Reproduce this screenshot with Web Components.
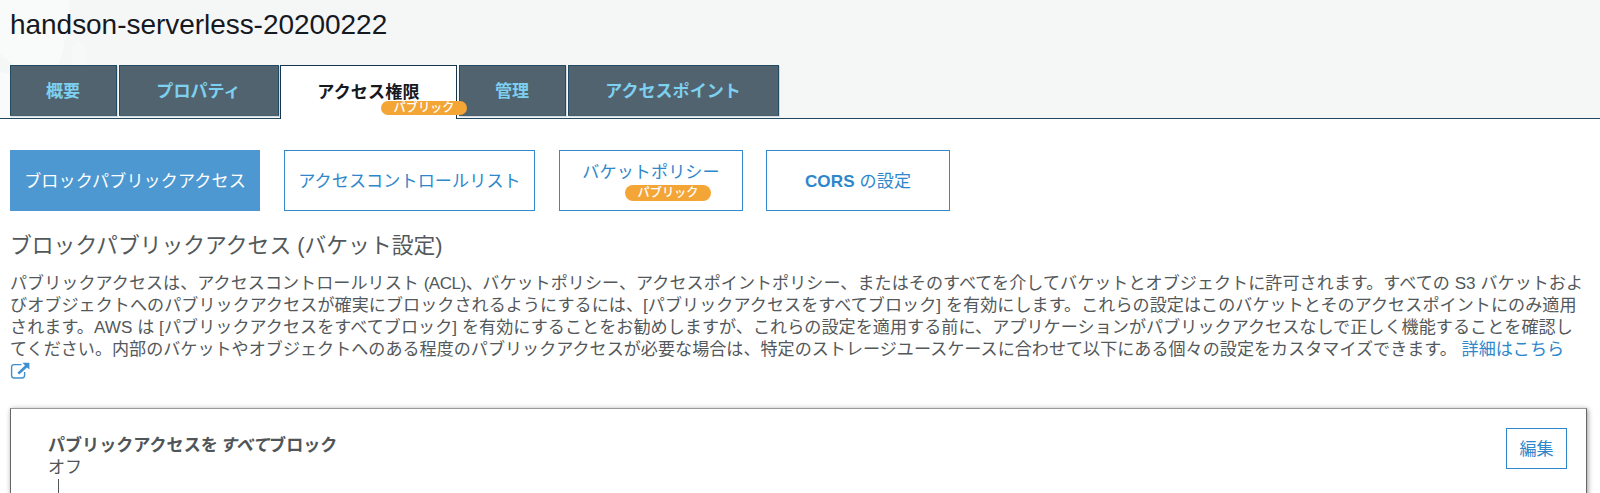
<!DOCTYPE html>
<html lang="ja">
<head>
<meta charset="utf-8">
<title>handson-serverless-20200222</title>
<style>
body{margin:0;background:#fff;height:493px;overflow:hidden;color:#53585a;font:17.07px/22px "Liberation Sans","Noto Sans CJK JP",sans-serif}
</style>
</head>
<body>
<s3-page></s3-page>
<script>
function define(name, html) {
  const t = document.createElement('template');
  t.innerHTML = html;
  customElements.define(name, class extends HTMLElement {
    constructor() {
      super();
      this.attachShadow({mode: 'open'}).append(t.content.cloneNode(true));
    }
  });
}

define('s3-badge', `<style>
:host{display:flex;align-items:center;justify-content:center;box-sizing:border-box;width:86px;height:14px;border-radius:7px;background:#f3a536;color:#fff;font-size:12.2px;font-weight:500;line-height:12px;white-space:nowrap;letter-spacing:0}
</style><slot></slot>`);

define('s3-tab', `<style>
:host{display:flex;position:relative;box-sizing:border-box;width:var(--w);height:51px;align-items:center;justify-content:center;background:#51636f;border:1px solid #234a63;border-bottom-color:#45606f;color:#7dd0f0;font-weight:700;white-space:nowrap;box-shadow:1px 1px 0 #d3d9de;padding:2px 1px 0 0}
:host([active]){height:54px;margin-left:-1px;background:#fff;border-color:#16364d;border-bottom:0;color:#16191f;padding:0;box-shadow:none;letter-spacing:.15px;z-index:2}
::slotted(s3-badge){position:absolute;left:100px;top:35px;z-index:2}
</style><slot></slot><slot name="badge"></slot>`);

define('s3-pill', `<style>
:host{display:flex;flex-direction:column;align-items:center;justify-content:center;box-sizing:border-box;width:var(--w);height:61px;padding-top:2px;border:1px solid #3389cb;color:#2e87cb;white-space:nowrap;letter-spacing:.12px}
:host([active]){background:#4d98d1;border-color:#4d98d1;color:#fff}
::slotted(s3-badge){margin:1px 0 1px 34px;height:16px!important;border-radius:8px!important}
b{font-weight:700}
</style><div><slot></slot></div><slot name="badge"></slot>`);

define('s3-header', `<style>
:host{display:grid;grid-template-rows:65px 53px;height:118px;box-sizing:content-box;border-bottom:1px solid #20485f;background:#f5f7f7;position:relative}
.art{position:absolute;left:0;top:0}
h1{margin:0;padding:9px 0 0 10px;font-size:28px;line-height:32px;font-weight:400;color:#16191f;position:relative;letter-spacing:-.04px}
nav{display:flex;align-items:flex-start;gap:2px;padding-left:10px;position:relative}
</style>
<svg class="art" width="110" height="118"><path d="M0 0H70Q68 36 58 66L40 90 10 118H0V72L30 78 0 54Z" fill="#f9fbfa"/><path d="M72 65V50Q72 42 79 42Q86 42 86 55V65Z" fill="#f7f9f8"/></svg>
<h1>handson-serverless-20200222</h1>
<nav>
<s3-tab style="--w:107px">概要</s3-tab>
<s3-tab style="--w:160px">プロパティ</s3-tab>
<s3-tab active style="--w:177px">アクセス権限<s3-badge slot="badge">パブリック</s3-badge></s3-tab>
<s3-tab style="--w:107px">管理</s3-tab>
<s3-tab style="--w:211px">アクセスポイント</s3-tab>
</nav>`);

define('s3-external-icon', `<style>:host{display:block;height:22px;padding-top:1px;box-sizing:border-box}svg{display:block}</style>
<svg width="20" height="18" viewBox="0 0 20 18"><path d="M11.4 2.6H4Q1.6 2.6 1.6 5V13.6Q1.6 16 4 16H12Q14.6 16 14.6 13.6V10" fill="none" stroke="#3d91d0" stroke-width="1.4"/><path d="M12.4.8H19.4V7.6L17 5.4 9.2 12.6 7.4 10.8 15 3.4Z" fill="#3d91d0"/></svg>`);

define('s3-notice', `<style>
:host{display:block;padding-left:10px;white-space:nowrap}
p{margin:0}p span{display:block;letter-spacing:.065px}
p i{font-style:normal;letter-spacing:-.5px}
p span.first{letter-spacing:.045px}
p span.last{letter-spacing:.025px}a{color:#2e87cb}
</style><p>
<span class="first">パブリックアクセスは、アクセスコントロールリスト <i>(ACL)、</i>バケットポリシー、アクセスポイントポリシー、またはそのすべてを介してバケットとオブジェクトに許可されます。すべての S3 バケットおよ</span>
<span>びオブジェクトへのパブリックアクセスが確実にブロックされるようにするには、[パブリックアクセスをすべてブロック] を有効にします。これらの設定はこのバケットとそのアクセスポイントにのみ適用</span>
<span>されます。AWS は [パブリックアクセスをすべてブロック] を有効にすることをお勧めしますが、これらの設定を適用する前に、アプリケーションがパブリックアクセスなしで正しく機能することを確認し</span>
<span class="last">てください。内部のバケットやオブジェクトへのある程度のパブリックアクセスが必要な場合は、特定のストレージユースケースに合わせて以下にある個々の設定をカスタマイズできます。 <a>詳細はこちら</a></span>
</p><s3-external-icon></s3-external-icon>`);

define('s3-settings', `<style>
:host{display:flex;justify-content:space-between;align-items:flex-start;box-sizing:border-box;height:96px;margin:0 13px 0 10px;padding:18px 19px 0 37px;border:1px solid #666;border-top-color:#999;border-bottom:0;box-shadow:1px 1px 5px rgba(0,0,0,.4);color:#505557}
.t{padding-top:8px}b{display:block;font-weight:700}em{font-style:italic;margin-left:2px}
.line{width:1px;height:16px;background:#505557;margin:0 0 0 10px}
button{all:unset;box-sizing:border-box;width:61px;height:41px;padding-top:2px;margin-top:1px;border:1px solid #2e87cb;color:#2e87cb;text-align:center}
</style><div class="t"><b>パブリックアクセスを<em>すべて</em>ブロック</b>オフ<div class="line"></div></div><button>編集</button>`);

define('s3-page', `<style>
:host{display:block;height:493px;overflow:hidden}
.pills{display:flex;gap:24px;padding:31px 0 0 10px}
h2{margin:20px 0 0;padding-left:10px;font-size:21.8px;line-height:30px;font-weight:400;white-space:nowrap}
s3-notice{margin-top:12px}
s3-settings{margin-top:25px}
</style>
<s3-header></s3-header>
<div class="pills">
<s3-pill active style="--w:250px">ブロックパブリックアクセス</s3-pill>
<s3-pill style="--w:251px">アクセスコントロールリスト</s3-pill>
<s3-pill style="--w:184px">バケットポリシー<s3-badge slot="badge">パブリック</s3-badge></s3-pill>
<s3-pill style="--w:184px;margin-left:-1px"><b>CORS</b> の設定</s3-pill>
</div>
<h2>ブロックパブリックアクセス (バケット設定)</h2>
<s3-notice></s3-notice>
<s3-settings></s3-settings>`);
</script>
</body>
</html>
